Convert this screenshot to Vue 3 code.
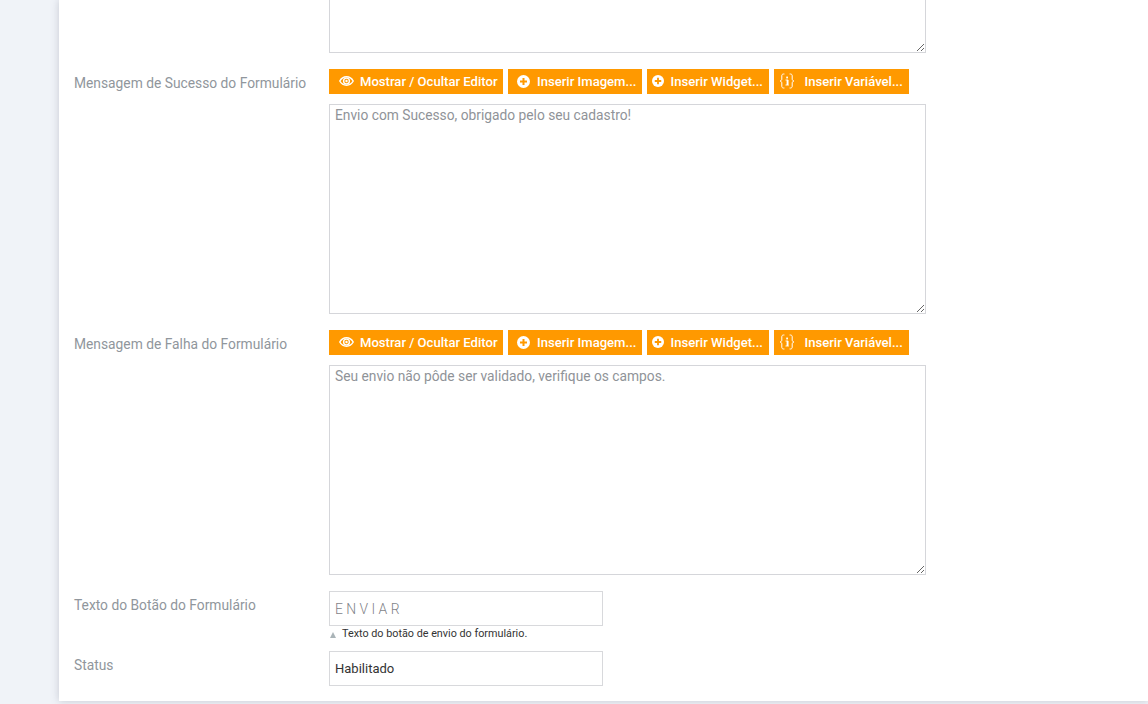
<script setup>
const tools = [
  { kind: 'eye', label: 'Mostrar / Ocultar Editor', cls: 'b1' },
  { kind: 'plus', label: 'Inserir Imagem...', cls: 'b2' },
  { kind: 'plus', label: 'Inserir Widget...', cls: 'b3' },
  { kind: 'var', label: 'Inserir Variável...', cls: 'b4' },
]
const editors = [
  { label: 'Mensagem de Sucesso do Formulário', text: 'Envio com Sucesso, obrigado pelo seu cadastro!' },
  { label: 'Mensagem de Falha do Formulário', text: 'Seu envio não pôde ser validado, verifique os campos.' },
]
</script>

<template>
  <div class="page">
    <main class="panel">
      <div class="row first">
        <div class="label"></div>
        <div class="control"><textarea class="area clipped" aria-label="Mensagem"></textarea></div>
      </div>

      <div v-for="e in editors" :key="e.label" class="row editor">
        <div class="label lab-editor">{{ e.label }}</div>
        <div class="control">
          <div class="toolbar">
            <button v-for="t in tools" :key="t.label" type="button" class="tool" :class="t.cls">
              <svg v-if="t.kind === 'eye'" class="ic eye" viewBox="0 0 15 10" width="15" height="10">
                <path d="M.8 5C2.4 2.1 4.7.8 7.5.8S12.6 2.1 14.2 5C12.6 7.9 10.3 9.2 7.5 9.2S2.4 7.9.8 5Z" fill="none" stroke="#fff" stroke-width="1.5"/>
                <circle cx="7.5" cy="5" r="2.9" fill="none" stroke="#fff" stroke-width="1.4"/>
                <circle cx="7.5" cy="5" r="1.2" fill="#fff"/>
              </svg>
              <svg v-else-if="t.kind === 'plus'" class="ic plus" viewBox="0 0 13 13" width="13" height="13">
                <circle cx="6.5" cy="6.5" r="6.5" fill="#fff"/>
                <path d="M6.5 3v7M3 6.5h7" stroke="#ff9900" stroke-width="2"/>
              </svg>
              <svg v-else class="ic vars" viewBox="0 0 16 16" width="16" height="16">
                <g fill="none" stroke="#fff" stroke-width="1">
                  <path d="M5.4 1H4.6C3.2 1 2.8 1.8 2.8 3v3C2.8 7.1 2.2 7.7 1 8c1.2.3 1.8.9 1.8 2v3c0 1.2.4 2 1.8 2h.8"/>
                  <path d="M10.6 1h.8C12.8 1 13.2 1.8 13.2 3v3c0 1.1.6 1.7 1.8 2-1.2.3-1.8.9-1.8 2v3c0 1.2-.4 2-1.8 2h-.8"/>
                  <path d="M6.5 7h2.6v4.6" stroke-width=".9"/>
                  <path d="M6.5 12h3.4" stroke-width=".9"/>
                </g>
                <rect x="7.2" y="3.6" width="1.8" height="1.8" fill="#fff"/>
                <rect x="7.6" y="7" width="1.4" height="5" fill="#fff"/>
              </svg>
              <span>{{ t.label }}</span>
            </button>
          </div>
          <textarea class="area" :placeholder="e.text" :aria-label="e.label"></textarea>
        </div>
      </div>

      <div class="row field">
        <div class="label">Texto do Botão do Formulário</div>
        <div class="control">
          <input class="input spaced" placeholder="E N V I A R" aria-label="Texto do Botão do Formulário" />
          <div class="hint"><span class="tri"></span>Texto do botão de envio do formulário.</div>
        </div>
      </div>

      <div class="row field status">
        <div class="label">Status</div>
        <div class="control">
          <div class="input select">Habilitado</div>
        </div>
      </div>
    </main>
  </div>
</template>

<style>
html, body { margin: 0; overflow: hidden; }
</style>

<style scoped>
.page {
  height: 704px;
  overflow: hidden;
  background: #f0f3f8;
  padding-left: 59px;
  font-family: Roboto, "Liberation Sans", sans-serif;
}
.panel {
  height: 701px;
  box-sizing: border-box;
  background: #fff;
  padding-left: 15px;
  box-shadow: 0 0 8px rgba(90, 95, 115, .28);
  overflow: hidden;
}
.row { display: flex; }
.label {
  width: 255px;
  flex: none;
  font-size: 13.8px;
  line-height: 20px;
  color: #90969c;
}
.control { width: 597px; }
.first { height: 53px; align-items: flex-end; }
.area {
  display: block;
  box-sizing: border-box;
  width: 597px;
  height: 210px;
  margin: 0;
  padding: 0 5px;
  border: 1px solid #d5d6da;
  border-radius: 0;
  outline: none;
  background: #fff;
  font: 13.77px/20px Roboto, "Liberation Sans", sans-serif;
}
.area::placeholder { color: #8f9398; opacity: 1; }
.clipped { flex: none; }
.editor { margin-top: 16px; }
.lab-editor { padding-top: 4px; }
.toolbar { display: flex; gap: 5px; margin-bottom: 10px; }
.tool {
  display: flex;
  align-items: center;
  box-sizing: border-box;
  height: 25px;
  padding: 0;
  border: 0;
  background: #ff9900;
  color: #fff;
  font: 500 13.08px/25px Roboto, "Liberation Sans", sans-serif;
  white-space: nowrap;
  overflow: hidden;
}
.b1 { width: 174px; padding-left: 10px; }
.b2 { width: 134px; padding-left: 9px; }
.b3 { width: 122px; padding-left: 5px; }
.b4 { width: 135px; padding-left: 5px; }
.ic { flex: none; margin-top: -1px; }
.eye { margin-right: 6px; }
.plus { margin-right: 7px; }
.b3 .plus { width: 12px; height: 12px; margin-right: 6.5px; }
.vars { margin-right: 9.5px; }
.field { margin-top: 16px; }
.input {
  display: block;
  box-sizing: border-box;
  width: 274px;
  height: 35px;
  margin: 0;
  padding: 0 5px;
  border: 1px solid #d8d9dc;
  border-radius: 0;
  outline: none;
  background: #fff;
  font: 300 13.9px/33px Roboto, "Liberation Sans", sans-serif;
}
.input::placeholder { color: #7f8388; opacity: 1; }
.select { color: #333; font-weight: 400; font-size: 13px; }
.hint {
  display: flex;
  align-items: center;
  height: 15px;
  margin-top: 0;
  font-size: 10.8px;
  line-height: 15px;
  color: #333;
}
.tri {
  width: 0;
  height: 0;
  margin: 3px 6px 0 1px;
  border-left: 3.5px solid transparent;
  border-right: 3.5px solid transparent;
  border-bottom: 6px solid #aab4b8;
}
.field .label { padding-top: 4px; }
.status { margin-top: 10px; }
.status .label { padding-top: 4px; }
</style>
